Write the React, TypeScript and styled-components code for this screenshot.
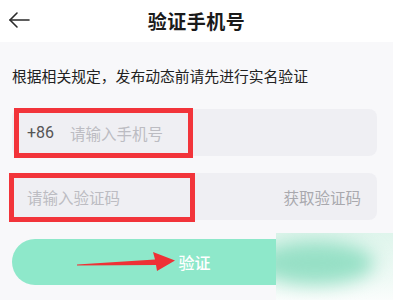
import React from 'react';
import styled, { createGlobalStyle } from 'styled-components';

const GlobalStyle = createGlobalStyle`
  html, body {
    margin: 0;
    padding: 0;
    background: #f8f8fa;
    font-family: "Noto Sans CJK SC", "Noto Sans", sans-serif;
  }
`;

const Page = styled.div`
  width: 393px;
  height: 300px;
  overflow: hidden;
  position: relative;
  background: #f8f8fa;
`;

const Header = styled.div`
  height: 42px;
  background: #ffffff;
  display: flex;
  align-items: center;
  justify-content: center;
  position: relative;
`;

const BackButton = styled.div`
  position: absolute;
  left: 8px;
  top: 11px;
  width: 22px;
  height: 18px;
  display: flex;
`;

const Title = styled.span`
  font-size: 19px;
  font-weight: 700;
  color: #1a1a1a;
  letter-spacing: 0.5px;
  margin-top: -2px;
`;

const Content = styled.div`
  display: flex;
  flex-direction: column;
  padding: 0 16px 0 12px;
`;

const Notice = styled.div`
  font-size: 14.8px;
  color: #222;
  height: 24px;
  line-height: 24px;
  margin-top: 22px;
`;

const Field = styled.div<{ gap: number }>`
  position: relative;
  height: 47px;
  margin-top: ${(p) => p.gap}px;
  background: #efeff3;
  border-radius: 8px;
  display: flex;
  align-items: center;
  padding: 0 16px 0 15px;
  font-size: 15.5px;
`;

const Prefix = styled.span`
  color: #555;
  font-family: "Roboto", "Noto Sans", sans-serif;
  font-size: 16px;
  margin-right: 16px;
`;

const Placeholder = styled.span`
  color: #bcbcc2;
  flex: 1;
`;

const Action = styled.span`
  color: #a9a9ae;
`;

const Highlight = styled.div<{ l: number; t: number; w: number; h: number }>`
  position: absolute;
  left: ${(p) => p.l}px;
  top: ${(p) => p.t}px;
  width: ${(p) => p.w}px;
  height: ${(p) => p.h}px;
  border: 5px solid #f2343a;
  box-sizing: border-box;
  pointer-events: none;
`;

const SubmitButton = styled.div`
  position: relative;
  height: 46px;
  margin-top: 19px;
  border-radius: 23px;
  background: #8ee8ca;
  color: #ffffff;
  font-size: 16px;
  font-weight: 500;
  display: flex;
  align-items: center;
  justify-content: center;
`;

const ArrowMark = styled.svg`
  position: absolute;
  left: 77px;
  top: 250px;
`;

const Watermark = styled.div`
  position: absolute;
  left: 276px;
  top: 233px;
  width: 117px;
  height: 67px;
  overflow: hidden;
  background: linear-gradient(180deg, #dff5ec 0%, #f0faf6 70%, #fafdfc 100%);
`;

const WatermarkBlob = styled.div`
  position: absolute;
  left: -20px;
  top: 8px;
  width: 118px;
  height: 44px;
  border-radius: 50%;
  background: #97e0c6;
  filter: blur(9px);
`;

export default function App() {
  return (
    <Page>
      <GlobalStyle />
      <Header>
        <BackButton>
          <svg width="22" height="18" viewBox="0 0 22 18" fill="none" stroke="#2a2a2a" strokeWidth="1.6" strokeLinecap="round" strokeLinejoin="round">
            <path d="M21 9H2" />
            <path d="M9 2L2 9l7 7" />
          </svg>
        </BackButton>
        <Title>验证手机号</Title>
      </Header>
      <Content>
        <Notice>根据相关规定，发布动态前请先进行实名验证</Notice>
        <Field gap={21}>
          <Prefix>+86</Prefix>
          <Placeholder>请输入手机号</Placeholder>
        </Field>
        <Field gap={17}>
          <Placeholder>请输入验证码</Placeholder>
          <Action>获取验证码</Action>
        </Field>
        <SubmitButton>验证</SubmitButton>
      </Content>
      <Highlight l={14} t={108} w={179} h={50} />
      <Highlight l={9} t={173} w={186} h={49} />
      <ArrowMark width="100" height="24" viewBox="0 0 100 24">
        <path d="M0 14.5 L78 9.5 L76 2 L98 10.5 L80 21 L79 15 L0 15.5 Z" fill="#ee3136" />
      </ArrowMark>
      <Watermark>
        <WatermarkBlob />
      </Watermark>
    </Page>
  );
}
